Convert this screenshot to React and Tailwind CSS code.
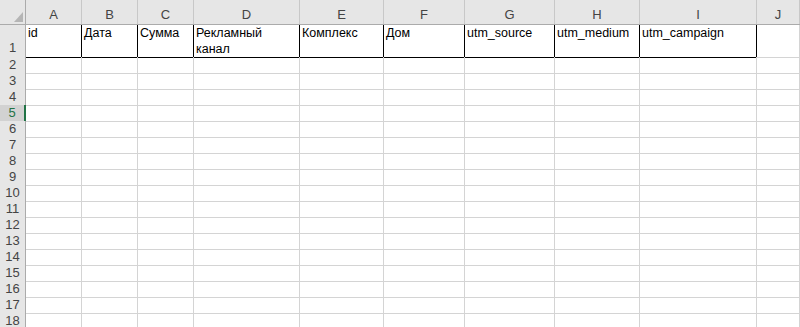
import React from "react";

const cols = ["A", "B", "C", "D", "E", "F", "G", "H", "I", "J"];
const headers = ["id", "Дата", "Сумма", "Рекламный\nканал", "Комплекс", "Дом", "utm_source", "utm_medium", "utm_campaign"];
const gridCls = "grid grid-cols-[26px_56px_56px_56px_106px_84px_81px_90px_85px_117px_1fr]";

const App = () => {
	const rows = Array.from({ length: 17 }, (_, i) => i + 2);

	return (
		<div className="w-[800px] h-[327px] overflow-hidden bg-white font-['Liberation_Sans',Arial,sans-serif] text-[12.5px] text-black">
			{/* Column headers */}
			<div className={`${gridCls} h-[25px] bg-[#e6e6e6] border-b border-[#ababab]`}>
				<div className="relative border-r border-[#ababab]">
					<svg className="absolute left-[14px] top-[12px]" width="9" height="10" viewBox="0 0 9 10">
						<polygon points="9,0 9,10 0,10" fill="#b5b5b5" />
					</svg>
				</div>
				{cols.map((c) => (
					<div key={c} className="flex justify-center pt-[7px] leading-[16px] text-[13px] text-[#444] border-r border-[#c8c8c8]">
						{c}
					</div>
				))}
			</div>

			{/* Row 1 with headers */}
			<div className={`${gridCls} h-[32px]`}>
				<div className="flex items-end justify-center pb-[1px] leading-[16px] text-[13px] text-[#444] bg-[#e6e6e6] border-r border-b border-[#ababab]">
					1
				</div>
				{headers.map((h, i) => (
					<div key={i} className="px-[2px] leading-[16px] whitespace-pre border-r border-b border-black">
						{h}
					</div>
				))}
				<div className="border-r border-b border-[#d4d4d4]" />
			</div>

			{/* Empty rows */}
			{rows.map((r) => (
				<div key={r} className={`${gridCls} h-[16px]`}>
					{r === 5 ? (
						<div className="flex items-center justify-center leading-[16px] text-[13px] text-[#217346] bg-[#d2d2d2] border-r-2 border-[#217346] border-b border-b-[#ababab]">
							{r}
						</div>
					) : (
						<div className="flex items-center justify-center leading-[16px] text-[13px] text-[#444] bg-[#e6e6e6] border-r border-b border-[#ababab] border-b-[#d0d0d0]">
							{r}
						</div>
					)}
					{cols.map((c) => (
						<div key={c} className="border-r border-b border-[#d4d4d4]" />
					))}
				</div>
			))}
		</div>
	);
};

export default App;
